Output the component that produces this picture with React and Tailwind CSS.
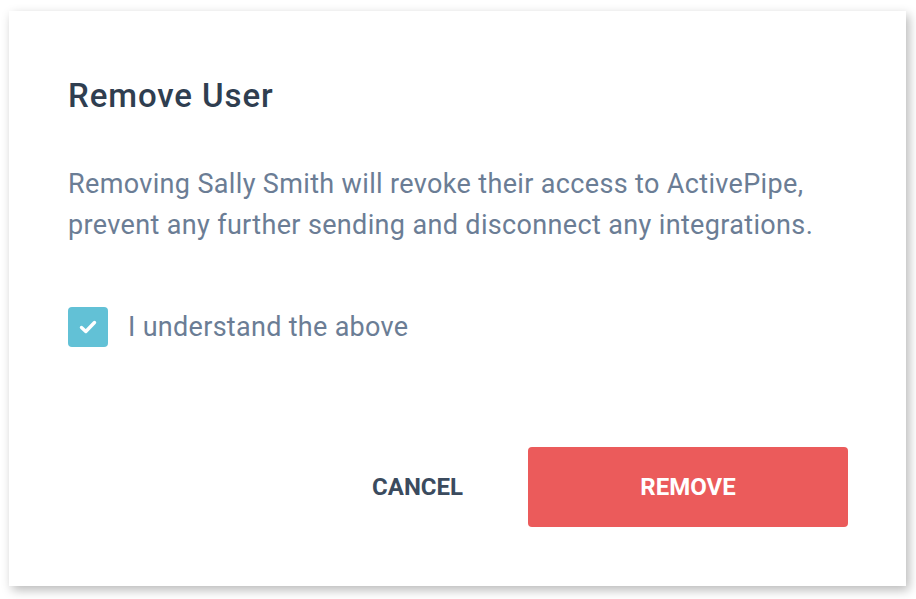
import React, { useState } from "react";

const RemoveUserModal = () => {
  const [checked, setChecked] = useState(true);

  return (
    <div className="min-h-screen w-full bg-white pl-[9px] pt-[11px] font-['Roboto',sans-serif]">
      <div className="flex h-[575px] w-[897px] flex-col bg-white pb-[59px] pl-[59px] pr-[58px] pt-[65px] shadow-[3px_4px_10px_rgba(0,0,0,0.28)]">
        {/* Header */}
        <h2 className="text-[33px] font-medium leading-[40px] tracking-[0.9px] text-[#2f3e50]">Remove User</h2>

        {/* Body */}
        <div className="mt-[48px] whitespace-nowrap text-[27px] leading-[41px] tracking-[0.35px] text-[#6b7d95]">
          <p>Removing Sally Smith will revoke their access to ActivePipe,</p>
          <p>prevent any further sending and disconnect any integrations.</p>
        </div>

        <label className="mt-[61px] flex cursor-pointer items-center gap-[20px]">
          <button
            type="button"
            onClick={() => setChecked(!checked)}
            className={`flex h-[40px] w-[40px] shrink-0 items-center justify-center rounded-[4px] ${
              checked ? "bg-[#62c1d6]" : "border-2 border-[#c5ced8] bg-white"
            }`}
          >
            {checked && (
              <svg width="18" height="14" viewBox="0 0 18 14" fill="none">
                <path
                  d="M2.5 7.5L6.8 11.5L15.5 2.5"
                  stroke="white"
                  strokeWidth="3.4"
                  strokeLinecap="round"
                  strokeLinejoin="round"
                />
              </svg>
            )}
          </button>
          <span className="text-[27px] leading-[40px] tracking-[0.3px] text-[#6b7d95]">I understand the above</span>
        </label>

        {/* Actions */}
        <div className="mt-auto flex items-center justify-end gap-[65px]">
          <button className="text-[24px] font-bold text-[#3b4b5e]">CANCEL</button>
          <button className="h-[80px] w-[320px] rounded-[4px] bg-[#eb5b5b] text-[24px] font-bold text-white">
            REMOVE
          </button>
        </div>
      </div>
    </div>
  );
};

export default function App() {
  return <RemoveUserModal />;
}
